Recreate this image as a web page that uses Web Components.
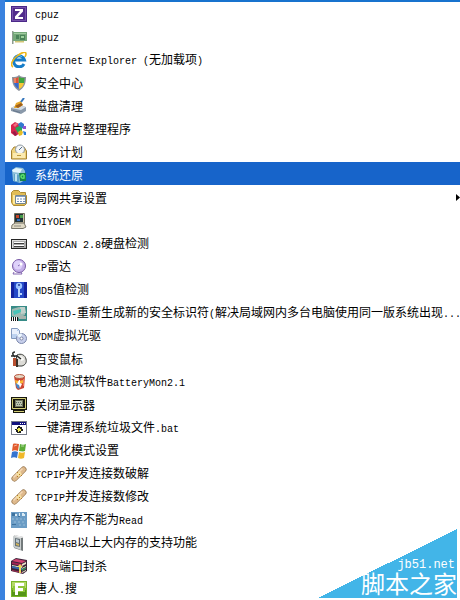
<!DOCTYPE html>
<html lang="zh-CN">
<head>
<meta charset="utf-8">
<title>系统工具</title>
<style>
html, body { margin: 0; background: #fff; }
body { font: 12px/22px "Noto Sans CJK SC", sans-serif; color: #000; }
</style>
</head>
<body>
<tool-menu>
<menu-entry icon="z">cpuz</menu-entry>
<menu-entry icon="card">gpuz</menu-entry>
<menu-entry icon="ie">Internet Explorer (无加载项)</menu-entry>
<menu-entry icon="shield">安全中心</menu-entry>
<menu-entry icon="clean">磁盘清理</menu-entry>
<menu-entry icon="defrag">磁盘碎片整理程序</menu-entry>
<menu-entry icon="task">任务计划</menu-entry>
<menu-entry icon="restore" selected>系统还原</menu-entry>
<menu-entry icon="folder" submenu>局网共享设置</menu-entry>
<menu-entry icon="pc">DIYOEM</menu-entry>
<menu-entry icon="hdd">HDDSCAN 2.8硬盘检测</menu-entry>
<menu-entry icon="radar">IP雷达</menu-entry>
<menu-entry icon="key">MD5值检测</menu-entry>
<menu-entry icon="sid">NewSID-重新生成新的安全标识符(解决局域网内多台电脑使用同一版系统出现...</menu-entry>
<menu-entry icon="disc">VDM虚拟光驱</menu-entry>
<menu-entry icon="mouse">百变鼠标</menu-entry>
<menu-entry icon="battery">电池测试软件BatteryMon2.1</menu-entry>
<menu-entry icon="monitor">关闭显示器</menu-entry>
<menu-entry icon="bat">一键清理系统垃圾文件.bat</menu-entry>
<menu-entry icon="xp">XP优化模式设置</menu-entry>
<menu-entry icon="aid">TCPIP并发连接数破解</menu-entry>
<menu-entry icon="aid">TCPIP并发连接数修改</menu-entry>
<menu-entry icon="read">解决内存不能为Read</menu-entry>
<menu-entry icon="chip">开启4GB以上大内存的支持功能</menu-entry>
<menu-entry icon="rar">木马端口封杀</menu-entry>
<menu-entry icon="f">唐人.搜</menu-entry>
<site-mark slot="mark"></site-mark>
</tool-menu>

<script>
const ICONS = {
  z: '<path fill="#4b2889" d="M0 0h16v16H0z"/><path fill="#7552aa" d="M1 1h14v14H1z"/><path fill="#512b8c" d="M2 2h12v12H2z"/><path fill="#fff" d="M4 3h8v2.500L7 11h5v2H4v-2.500L9 5H4z"/>',
  card: '<path fill="#8e9c90" d="M1 2h1.500v13H1z"/><path fill="#75a779" d="M2 3h14v9H2z"/><path fill="#a1cda0" d="M3 4h12v1H3z"/><path fill="#4a8358" d="M5 6h3v4H5zM9 6h5v5H9z"/><path fill="#9cd19a" d="M10 7h3v2h-3z"/><path fill="#d3c677" d="M4 12h9v1.500H4z"/>',
  ie: '<path fill="none" stroke="#167dc8" stroke-width="3" d="M13 12A5.500 5.500 0 1 1 13.500 8H4"/><path fill="none" stroke="#70cdf4" d="M4 6c2-3 5-3 7-1"/><path fill="none" stroke="#edb719" stroke-width="1.600" d="M2 15C-1 13 1 8 6 4s9-5 9-2c0 1-.5 2-1 3"/>',
  shield: '<path fill="#8d929b" d="M8 0c2 2 4 2 7 2 0 7-2 11-7 14C3 13 1 9 1 2c3 0 5 0 7-2z"/><path fill="#df5430" d="M2.500 3C5 3 6 3 7.500 2v6H3z"/><path fill="#3da63c" d="M8 2c2 1 3 1 5.500 1L13 8H8z"/><path fill="#3868cb" d="M3 8h4.500v6C5 12.500 4 11 3 8z"/><path fill="#f8c735" d="M8 8h5c-1 3-2 5-5 6z"/><path stroke="#fff8" d="M4 3v5"/>',
  clean: '<path fill="#8a99aa" d="M0 10l6-3 9 2v4l-5 3-10-3z"/><path fill="#d4dde6" d="M0 10l6-3 9 2-5 3z"/><path fill="#65758a" d="M2 12l7 2v1l-7-2z"/><path fill="#e6a72a" d="M5 5l5-2 2 4-5 3H3z"/><path fill="#9e5e1d" d="M4 8l6-3 2 2-5 3z"/><path stroke="#3576bd" stroke-width="2" d="M10 4l3-4"/>',
  defrag: '<path fill="#d8264d" d="M0 4l4-3 4 2v10l-4 2-4-3z"/><path fill="#f26d7f" d="M2 4l3-2 2 1-3 3z"/><path fill="#3278d0" d="M7 3l3-2 3 2v4L9 8z"/><path fill="#27aa5b" d="M4 7l4-2 3 2v4l-4 1z"/><path fill="#e5bd28" d="M7 11l3-2 2 2-1 3-3 1z"/><path fill="#9453ce" d="M12 5h3v3h-3z"/><path fill="#287eda" d="M12 10l3 1v3h-2z"/><path fill="#981a47" d="M1 11l3-1 2 4-2 1z"/>',
  task: '<path fill="#eed27c" stroke="#a48131" d="M.5 6.500L3 3h10l2.500 4v8H.5z"/><circle cx="9" cy="5.500" r="4.500" fill="#f4f6f7" stroke="#8d989f"/><path fill="none" stroke="#536f8f" d="M8 6l3-3"/><path fill="#fbeab0" d="M2 9h12v5H2z"/><path fill="#bd983e" d="M6 11h4v1H6z"/>',
  restore: '<path fill="#8cbed9" d="M1 3l4-3 7 1 2 3v9l-5 3-7-2z"/><path fill="#e3f5fc" d="M1 3l4-2 6 1-2 4-7-1z"/><path fill="#5fa4c8" d="M3 7l5 1v7l-5-1z"/><path fill="#c2e4f3" d="M4 7h2v7H4z"/><path fill="#16834b" d="M8 6h7v8H9z"/><path fill="none" stroke="#5ee36e" stroke-width="1.500" d="M13 8c-4-1-4 4 0 3V8"/>',
  folder: '<path fill="#e1bd57" stroke="#ad8a32" d="M.5 2.500l2-2h5l2 2h5v3h1v8l-2 2h-11l-2-3z"/><path fill="#ffe99c" d="M2 5h12v9H2z"/><path fill="#fff" stroke="#738693" d="M4.500 5.500h10v8h-10z"/><path fill="#839fc5" d="M5 6h9v1H5z"/><path stroke="#718fba" stroke-dasharray="2 1" d="M6 9h8M6 11.500h8"/>',
  pc: '<path fill="#c9c1a7" stroke="#716c5d" d="M3.500.5h10v10h-10z"/><path fill="#213238" d="M4 1h8v8H4z"/><path fill="#c84729" d="M5 2h3v3H5z"/><path fill="#469b4a" d="M9 2h3v3H9z"/><path fill="#366dbb" d="M6 6h3v2H6z"/><path fill="#dfd9c5" stroke="#777469" d="M1 12l3-2h9l2 4-3 1.500H.5z"/><path stroke="#8f8c82" d="M3 13h7"/>',
  hdd: '<path fill="#252525" d="M0 3h16v10H0z"/><path fill="#dedede" d="M1 4h14v8H1z"/><path fill="#aaa" d="M2 5h13v7H2z"/><path fill="#fff" d="M3 6h10v1H3zM3 9h10v1H3z"/><path fill="#3d3d3d" d="M3 7h10v1H3zM3 10h10v1H3z"/>',
  radar: '<circle cx="8" cy="7" r="6.500" fill="#c4afe8" stroke="#7859a5"/><circle cx="7" cy="6" r="4.500" fill="#ded1fa"/><path fill="none" stroke="#8366b1" d="M7 7l4-3M3 13l-1 2h9l-1-2"/><circle cx="10" cy="5" r="1.500" fill="#fff"/>',
  key: '<path fill="#14239d" d="M0 0h16v16H0z"/><path fill="#2549c7" d="M3 0h10v16H3z"/><circle cx="8" cy="4" r="3.200" fill="#9dc4ff"/><path fill="#b9d5ff" d="M7 6h2v9H7zM9 11h2v2H9z"/><circle cx="8" cy="3" r="1" fill="#203792"/>',
  sid: '<path fill="#378b87" d="M0 1h16v15H0z"/><path fill="#9fb9b2" d="M1 4l7-2 6 1v7l-6 3-7-2z"/><path fill="#c2d0ca" d="M9 2h5l1 6-5 1z"/><path fill="#47c3b8" d="M2 6l8-2v3l-7 3z"/><path fill="#a9b3ad" d="M8 11h7v3H8z"/><path fill="#fff" d="M0 12h7v4H0z"/><path fill="#111" d="M0 12h1v4H0zM2 12h1v4H2zM4 12h1v4H4zM6 12h1v4H6z"/>',
  disc: '<path fill="#e9f0fc" stroke="#8298bd" d="M.5.5h6l2 2v8h-8z"/><path fill="#a9c5e9" d="M6 1v2h2z"/><path fill="#bdd2f0" d="M1 6h5v4H1z"/><circle cx="10.500" cy="10.500" r="5" fill="#c7cfeb" stroke="#7986aa"/><path fill="#eef9ff" d="M10 10L6 8c1-2 3-3 5-2z"/><circle cx="10.500" cy="10.500" r="1.500" fill="#fff" stroke="#7e86a4"/>',
  mouse: '<path fill="#dddcd7" stroke="#393c38" d="M6 4c4-2 8 0 9 4s-1 6-4 7H7L5 9z"/><path fill="#f8f8f5" d="M8 5c3 0 5 2 5 4l-3 1z"/><path fill="none" stroke="#272927" stroke-width="1.500" d="M4 6C1 4 1 1 4 1M0 5h6l4 3"/><path fill="#b84e2e" d="M2 7h3v8H2z"/><path fill="#3c3028" d="M5 8h2v8H5z"/>',
  battery: '<path fill="#cb4632" d="M3 2h11l-1 12-6 2-2-2z"/><ellipse cx="8.500" cy="2.500" rx="5" ry="2" fill="#e7d8c5" stroke="#b6543d"/><path fill="#f9b735" d="M4 6l4 1 4-1v3l-7 2z"/><path fill="#4688cb" d="M4.500 9l4 2v4L6 14z"/><path fill="#fff" d="M8 6h1v3l2 1-2 4-1-3-2-1z"/><path fill="#ee785e" d="M12 5h1v7h-1z"/>',
  monitor: '<path fill="#17170e" d="M0 0h16v13h-2v3H2v-3H0z"/><path fill="none" stroke="#d4cf78" d="M1.500 1.500h13v10h-13zM3 14.500h10"/><path fill="#747962" d="M4 3h8v7H4z"/><path fill="#bdc4af" d="M5 4h6v5H5z"/><path stroke="#5e6b60" stroke-dasharray="1 1" d="M5 5.500h6M6 7.500h5"/>',
  bat: '<path fill="#777c8a" d="M0 1h16v14H0z"/><path fill="#fff" d="M1 2h14v12H1z"/><path fill="#11117d" d="M1 2h14v3H1z"/><path fill="#fff" d="M9 3h1v1H9zM11 3h1v1h-1zM13 3h1v1h-1z"/><path fill="#212121" d="M7 6h2v1h2v2h1v2h-2v2H6v-1H5v-2H4V9h2V7h1z"/><path fill="#f3ed54" d="M7 8h2v1h1v2H8v1H7v-2H6V9h1z"/>',
  xp: '<path fill="#e15b2d" d="M2 1c2-1 4 0 6 0L7 8C5 7 3 7 1 8z"/><path fill="#5bac38" d="M9 1c2 1 4 1 6 0l-1 7c-2 1-4 0-6 0z"/><path fill="#3573cf" d="M1 9c2-1 4-1 6 0l-1 6c-2-1-4-1-6 0z"/><path fill="#f1b829" d="M8 9c2 1 4 1 6 0l-1 6c-2 1-4 1-6 0z"/><path stroke="#fff8" d="M3 3l3-1M10 3h3"/>',
  aid: '<path stroke="#927149" stroke-width="6" stroke-linecap="round" d="M3.500 12.500l9-9"/><path stroke="#deb98c" stroke-width="4.600" stroke-linecap="round" d="M3.500 12.500l9-9"/><path stroke="#f5d9b8" stroke-width="1.500" stroke-linecap="round" d="M3 11l8-8"/><path fill="#f6df9e" d="M5 7l4-2 2 4-4 2z"/><path fill="#b57a29" d="M6 6h1v1H6zM8 8h1v1H8zM10 9h1v1h-1zM6 10h1v1H6z"/>',
  read: '<path fill="#6b9cc5" d="M0 0h16v16H0z"/><path fill="#3e729e" d="M1 1h3v3H1zM7 4h2v1H7zM1 12h4v1H1z"/><path fill="#dcecf5" d="M4 2h2v2H4zM8 1h1v3H8zM11 1h2v1h1v2h-3z"/><path stroke="#99bdd8" stroke-dasharray="2 2" d="M1 7h13M3 10h10M8 13h6"/>',
  chip: '<path fill="#737a7b" d="M3 0l9 2v14l-9-3z"/><path fill="#c9cece" d="M2 1l8 1v13l-8-3z"/><path fill="#657077" d="M4 3l5 1v8l-5-1z"/><path fill="#b9c7d0" d="M5 4l3 1v3L5 7z"/><path fill="#d1b45a" d="M5 8l3 1v2l-3-1z"/><path fill="#eee" d="M2 1l2-1 9 2-2 1z"/>',
  rar: '<path fill="#3c2439" d="M0 3l5-3 11 2v11l-4 3-12-3z"/><path fill="#d34272" d="M1 3l4-2 10 2-4 2z"/><path fill="#a32354" d="M1 4l10 2v2L1 6z"/><path fill="#e9e2ca" d="M11 6l4-2v2l-4 2zM11 10l4-2v1l-4 2zM11 14l4-2v1l-4 2zM1 7l10 2v1L1 8z"/><path fill="#3768aa" d="M1 8l10 2v2L1 10z"/><path fill="#a32f50" d="M1 12l10 2v1L1 13z"/><path fill="#36875b" d="M11 11l4-2v2l-4 2z"/><path fill="#e9d75d" d="M9 6l3 3h-2v6H8V9H6z"/>',
  f: '<path fill="#79b629" d="M0 0h16v16H0z"/><path fill="#b4d968" d="M1 1h14v6H1z"/><path fill="#559518" d="M1 9h14v6H1z"/><path fill="#8fc63a" d="M2 5h12v6H2z"/><path fill="#fff" d="M4 2h9v3H7v2h5v3H7v4H4z"/>'
};

class ToolMenu extends HTMLElement {
  constructor() {
    super();
    this.attachShadow({ mode: 'open' }).innerHTML = `
      <style>
        :host { display: block; position: relative; overflow: hidden; min-height: 100vh; box-sizing: border-box;
          padding-top: 1px; border-left: 5px solid #3a82df; background: #fff;
          box-shadow: inset 0 2px #1873ce; }
        nav { display: flex; flex-direction: column; }
      </style>
      <nav role="menu" aria-label="系统工具"><slot></slot></nav>
      <slot name="mark"></slot>`;
  }
}

class MenuEntry extends HTMLElement {
  connectedCallback() {
    if (this.shadowRoot) return;
    const label = this.textContent.trim().replace(/[\x20-\x7e]+/g, '<span class="latin">$&</span>');
    const submenu = this.hasAttribute('submenu');
    this.attachShadow({ mode: 'open' }).innerHTML = `
      <style>
        :host { display: block; }
        button { all: unset; box-sizing: border-box; display: flex; align-items: center; gap: 8px;
          width: 100%; height: 23px; padding: 2px 0 0 6px; cursor: default; }
        :host([selected]) button { background: #1764ca; color: #fff; }
        svg { flex: none; width: 16px; height: 16px; }
        .label { flex: 1; min-width: 0; overflow: hidden; line-height: 21px; white-space: pre; }
        .latin { font: 10px/20px "Liberation Mono", monospace; }
        .arrow { width: 4px; height: 7px; }
      </style>
      <button role="menuitem" ${submenu ? 'aria-haspopup="menu"' : ''}>
        <svg viewBox="0 0 16 16" fill="none" aria-hidden="true">${ICONS[this.getAttribute('icon')]}</svg>
        <span class="label">${label}</span>
        ${submenu ? '<svg class="arrow" viewBox="0 0 4 7" aria-hidden="true"><path d="M0 0l4 3.500L0 7z"/></svg>' : ''}
      </button>`;
  }
}

class SiteMark extends HTMLElement {
  constructor() {
    super();
    this.attachShadow({ mode: 'open' }).innerHTML = `
      <style>
        :host { position: absolute; right: 3px; bottom: 2px; box-sizing: border-box; width: 139px; height: 69px;
          display: flex; flex-direction: column; justify-content: flex-end; align-items: flex-end; color: #fff;
          background: linear-gradient(to bottom right, transparent 50%, #42b5e8 50%); }
        .url { font: 12px/12px "Liberation Mono", monospace; padding-right: 2px; }
        .name { font: 24px/27px "Liberation Sans", "Noto Sans CJK SC", sans-serif; }
      </style>
      <span class="url">jb51.net</span><span class="name">脚本之家</span>`;
  }
}

customElements.define('tool-menu', ToolMenu);
customElements.define('menu-entry', MenuEntry);
customElements.define('site-mark', SiteMark);
</script>
</body>
</html>
